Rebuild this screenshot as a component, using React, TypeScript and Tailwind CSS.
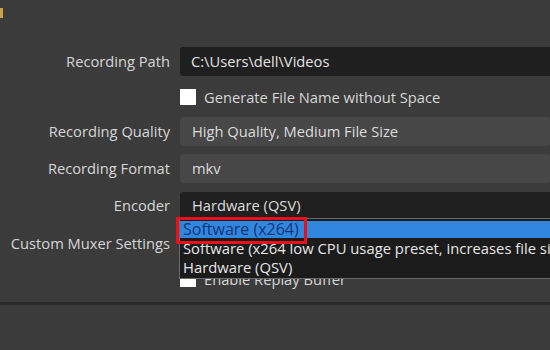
const font = { fontFamily: '"Open Sans", "Noto Sans", sans-serif' };

const labelCls = 'w-[180px] shrink-0 pr-[10px] text-right text-[14.7px] text-[#d6d6d6]';
const comboCls =
  'flex h-[29px] flex-1 items-center rounded-[3px] bg-[#474747] pl-[12px] text-[14.7px] text-[#dcdcdc]';

const Row = ({ label, children, className = '' }: { label?: string; children: React.ReactNode; className?: string }) => (
  <div className={`flex items-center ${className}`}>
    <div className={labelCls}>{label}</div>
    <div className="flex flex-1 items-center">{children}</div>
  </div>
);

const Check = ({ text }: { text: string }) => (
  <div className="flex items-center gap-[8px]">
    <div className="h-[16px] w-[16px] bg-white" />
    <span className="text-[14.7px] text-[#d6d6d6]">{text}</span>
  </div>
);

export default function App() {
  return (
    <div className="relative h-[350px] w-[550px] overflow-hidden bg-[#3b3b3b]" style={font}>
      {/* clipped icon in the corner */}
      <div className="absolute left-0 top-[8px] h-[10px] w-[3px] bg-[#c9a24a]" />

      <div className="flex flex-col pt-[47px]">
        <Row label="Recording Path">
          <div className="flex h-[29px] flex-1 items-center rounded-l-[3px] bg-[#1f1f1f] pl-[11px] text-[14.7px] text-[#e2e2e2]">
            C:\Users\dell\Videos
          </div>
        </Row>
        <Row className="mt-[10px] h-[22px]">
          <Check text="Generate File Name without Space" />
        </Row>
        <Row label="Recording Quality" className="mt-[9px]">
          <div className={comboCls}>High Quality, Medium File Size</div>
        </Row>
        <Row label="Recording Format" className="mt-[8px]">
          <div className={comboCls}>mkv</div>
        </Row>
        <Row label="Encoder" className="mt-[9px]">
          <div className="relative flex-1">
            <div className="flex h-[27px] items-center rounded-l-[3px] bg-[#202020] pl-[12px] text-[14.7px] text-[#dcdcdc]">
              Hardware (QSV)
            </div>
            {/* open dropdown list */}
            <div className="absolute left-[-1px] top-[26px] z-10 w-[420px] border border-[#6a6a6a] bg-[#1b1b1b] pb-[1px] pt-[2px] text-[14.8px] leading-[19px] text-[#e6e6e6]">
              <div className="h-[17px] whitespace-nowrap bg-[#3386dd] pl-[3px] text-[16px] leading-[17px] text-[#0e3578]">
                Software (x264)
              </div>
              <div className="whitespace-nowrap pl-[3px] pt-[1px]">
                Software (x264 low CPU usage preset, increases file size)
              </div>
              <div className="whitespace-nowrap pl-[3px]">Hardware (QSV)</div>
              <div className="pointer-events-none absolute left-[-4px] top-[-2px] h-[27px] w-[131px] border-[3px] border-[#e8101a]" />
            </div>
          </div>
        </Row>
        <Row label="Custom Muxer Settings" className="mt-[10px]">
          <div className="h-[29px] flex-1 rounded-l-[3px] bg-[#202020]" />
        </Row>
        <Row className="mt-[10px] h-[22px]">
          <Check text="Enable Replay Buffer" />
        </Row>
      </div>

      <div className="absolute inset-x-0 top-[302px] h-[3px] bg-[#2a2a2a]" />
    </div>
  );
}
